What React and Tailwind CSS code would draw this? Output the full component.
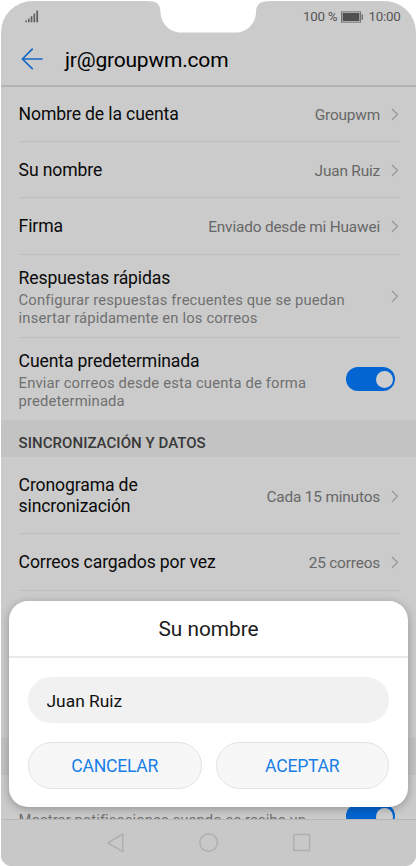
import React, { useState } from 'react';

const Chevron = () => (
  <svg width="8" height="13" viewBox="0 0 8 13" className="shrink-0" fill="none" stroke="#929292" strokeWidth="1.2">
    <path d="M0.9 0.8 6.4 6.3 0.9 11.8" />
  </svg>
);

const Toggle = ({ on, onClick }) => (
  <button
    role="switch"
    aria-checked={on}
    onClick={onClick}
    className={`flex h-6 w-[49px] shrink-0 items-center rounded-full px-[2.5px] ${on ? 'justify-end bg-[#0265d2]' : 'justify-start bg-[#9a9a9a]'}`}
  >
    <span className="size-[17px] rounded-full bg-[#cecece]" />
  </button>
);

// Fila con valor a la derecha y flecha
const ValueRow = ({ label, value, className }) => (
  <div className={`mr-[17px] ml-[17.6px] flex items-center justify-between border-b border-[#bebebe] ${className}`}>
    <p className="max-w-[210px] text-[17.6px] leading-[21px] tracking-[-0.13px] text-[#0a0a0a]">{label}</p>
    <div className="flex items-center gap-[11px]">
      <span className="pt-px text-[15.4px] leading-5 tracking-[-0.18px] whitespace-nowrap text-[#676767]">{value}</span>
      <Chevron />
    </div>
  </div>
);

const DetailText = ({ title, children }) => (
  <div className="pt-[3px]">
    <p className="text-[17.6px] leading-[21px] tracking-[-0.13px] text-[#0a0a0a]">{title}</p>
    <p className="mt-[2px] text-[14.8px] leading-[18px] tracking-[0.15px] whitespace-nowrap text-[#707070]">{children}</p>
  </div>
);

const StatusBar = () => (
  <div className="flex h-8 shrink-0 items-center justify-between pr-[15.5px] pl-[23.5px] text-[#555]">
    <svg width="14" height="13" viewBox="0 0 14 13" className="-mt-0.5" fill="#606060">
      <rect x="0.4" y="10.5" width="1.6" height="1.8" />
      <rect x="3" y="8.6" width="1.6" height="3.7" />
      <rect x="5.7" y="6.2" width="1.7" height="6.1" />
      <rect x="8.5" y="3.6" width="1.7" height="8.7" />
      <rect x="11.3" y="0.6" width="1.8" height="11.7" />
    </svg>
    <div className="flex items-center text-[13.4px] leading-4 tracking-[-0.25px]">
      <span>100 %</span>
      <svg width="22" height="12" viewBox="0 0 22 12" className="-mt-px mr-[5px] ml-1">
        <rect x="0.5" y="0.9" width="19" height="10.2" fill="none" stroke="#707070" />
        <rect x="1.6" y="2" width="16.8" height="8" fill="#505050" />
        <rect x="20.6" y="3.2" width="1.2" height="5.6" fill="#606060" />
      </svg>
      <span>10:00</span>
    </div>
  </div>
);

const NavBar = () => (
  <div className="flex h-[47px] shrink-0 items-start justify-center gap-[74px] border-t border-[#b6b6b6] bg-[#c8c8c8] pt-[13px]">
    <svg width="18" height="20" viewBox="0 0 18 20" fill="none" stroke="#afafaf" strokeWidth="1.5" strokeLinejoin="round">
      <path d="M15.8 1v17.6L0.8 9.8z" />
    </svg>
    <svg width="20" height="20" viewBox="0 0 20 20" fill="none" stroke="#afafaf" strokeWidth="1.5">
      <circle cx="9.6" cy="9.6" r="8.8" />
    </svg>
    <svg width="18" height="20" viewBox="0 0 18 20" fill="none" stroke="#afafaf" strokeWidth="1.5" strokeLinejoin="round">
      <rect x="0.8" y="1.5" width="15.8" height="16" rx="0.6" />
    </svg>
  </div>
);

const NameDialog = () => {
  const [name, setName] = useState('Juan Ruiz');
  const btn = 'h-[47px] flex-1 rounded-full border border-[#e2e2e2] bg-[#f7f7f8] pt-px text-[17.6px] tracking-[-0.25px] text-[#187fe6]';

  return (
    <div className="absolute top-[600px] right-[8px] left-[8px] h-[206px] rounded-[19px] bg-white shadow-[0_2px_10px_rgba(0,0,0,0.28)]">
      <h2 className="flex h-[57px] items-center justify-center border-b-2 border-[#e9e9e9] pt-[3px] text-[20.8px] text-[#1c1c1c]">
        Su nombre
      </h2>
      <div className="px-[19px] pt-[19px]">
        <input
          value={name}
          onChange={(e) => setName(e.target.value)}
          className="block h-[46px] w-full rounded-full bg-[#f1f1f1] px-[18.5px] pt-px text-[17.4px] text-[#111] outline-none"
        />
        <div className="mt-[19px] flex gap-[14px]">
          <button className={btn}>CANCELAR</button>
          <button className={btn}>ACEPTAR</button>
        </div>
      </div>
    </div>
  );
};

export default function App() {
  const [isDefault, setIsDefault] = useState(true);
  const [notify, setNotify] = useState(true);

  return (
    <div className="h-[866px] w-[417px] overflow-hidden bg-white px-px font-['Roboto',sans-serif]">
      <div className="relative flex h-full flex-col overflow-hidden rounded-t-[32px] rounded-b-[11px] border-t border-white bg-[#cbcbcb]">
        {/* Notch */}
        <svg width="138" height="33" viewBox="0 0 138 33" className="absolute -top-px left-[139px]" fill="#fff">
          <path d="M8 0v1.2h2c7 0 10.5 4 10.5 10.8C20.5 22 29 32.5 41 32.5h55c12 0 20-10.5 20-20.5 0-6.8 4-10.8 11-10.8h2V0z" />
        </svg>

        <StatusBar />
        <header className="flex h-[54px] shrink-0 items-center gap-[22px] border-b-2 border-[#b3b3b3] pl-5">
          <svg width="22" height="22" viewBox="0 0 22 22" fill="none" stroke="#1468c4" strokeWidth="1.7" strokeLinecap="round" strokeLinejoin="round">
            <path d="M21 11H1.5M11.2 1.2 1.4 11l9.8 9.6" />
          </svg>
          <h1 className="pt-0.5 text-[21px] leading-6 tracking-[-0.2px] text-black">jr@groupwm.com</h1>
        </header>

        <main className="flex min-h-0 flex-1 flex-col overflow-hidden">
          <ValueRow label="Nombre de la cuenta" value="Groupwm" className="h-[55px] shrink-0" />
          <ValueRow label="Su nombre" value="Juan Ruiz" className="h-14 shrink-0 pt-px" />
          <ValueRow label="Firma" value="Enviado desde mi Huawei" className="h-[57px] shrink-0 pt-px" />
          <div className="mr-[17px] ml-[17.6px] flex h-[83px] shrink-0 items-center justify-between border-b border-[#bebebe]">
            <DetailText title="Respuestas rápidas">
              Configurar respuestas frecuentes que se puedan<br />insertar rápidamente en los correos
            </DetailText>
            <Chevron />
          </div>
          <div className="flex h-[82px] shrink-0 items-center justify-between pr-[21px] pl-[17.6px]">
            <DetailText title="Cuenta predeterminada">
              Enviar correos desde esta cuenta de forma<br />predeterminada
            </DetailText>
            <Toggle on={isDefault} onClick={() => setIsDefault(!isDefault)} />
          </div>
          <h3 className="flex h-[37px] shrink-0 items-center bg-[#c3c3c3] pt-[9px] pl-[17.6px] text-[15px] font-medium tracking-[0.05px] text-[#383838]">
            SINCRONIZACIÓN Y DATOS
          </h3>
          <ValueRow label={<>Cronograma de<br />sincronización</>} value="Cada 15 minutos" className="h-[77px] shrink-0 pt-0.5" />
          <ValueRow label="Correos cargados por vez" value="25 correos" className="h-[57px] shrink-0 pt-px" />
          <div className="h-[147px] shrink-0" />
          <div className="h-[37px] shrink-0 bg-[#c3c3c3]" />
          <div className="flex h-[82px] shrink-0 items-center justify-between pr-[21px] pl-[17.6px] tracking-[-0.05px]">
            <DetailText title={<>&nbsp;</>}>
              <span className="tracking-[0.08px]">Mostrar notificaciones cuando se recibe un</span><br />&nbsp;
            </DetailText>
            <Toggle on={notify} onClick={() => setNotify(!notify)} />
          </div>
        </main>

        <NavBar />
        <NameDialog />
      </div>
    </div>
  );
}
